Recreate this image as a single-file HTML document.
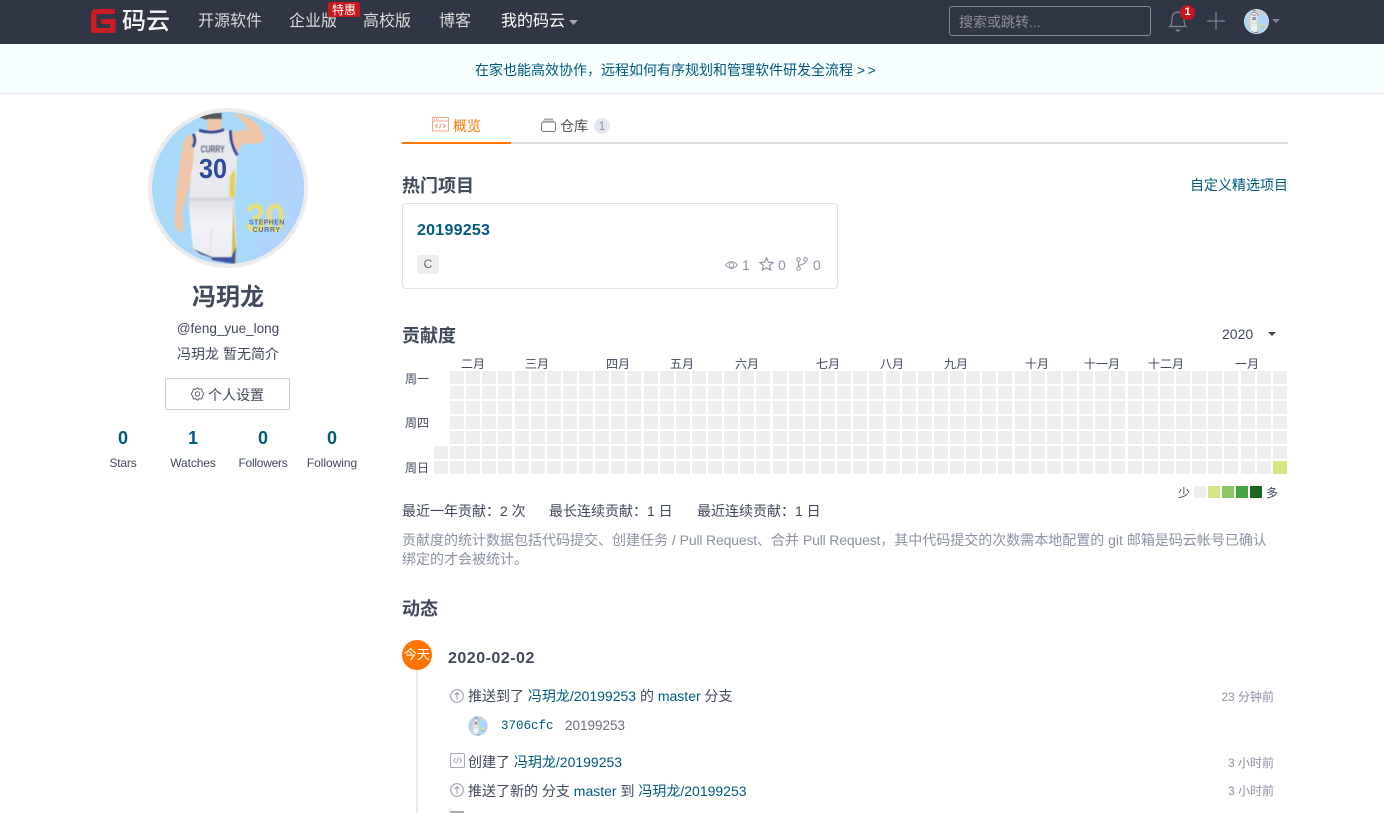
<!DOCTYPE html>
<html lang="zh"><head><meta charset="utf-8"><title>冯玥龙 - 码云</title>
<style>
html,body{margin:0;padding:0;background:#fff;width:1384px;height:813px;overflow:hidden}
body{font-family:"Liberation Sans","Noto Sans CJK SC",sans-serif;font-size:14px;color:#40485b;position:relative}
.t{position:absolute;white-space:nowrap;line-height:20px;height:20px}
.c{text-align:center;transform:translateX(-50%)}
.r{transform:translateX(-100%)}
.b{position:absolute}
a,.l{color:#005980;text-decoration:none}
.h{font-size:18px;font-weight:700;color:#40485b}
.n{font-size:16px;color:#d9dadd}
.m{font-size:12px;color:#40485b}
.g{color:#8c92a4}
.pr{letter-spacing:-.17px}
svg{position:absolute;overflow:visible}
</style></head><body>
<svg width="0" height="0" style="position:absolute">
<defs>
<clipPath id="cp"><circle cx="384" cy="263" r="228"/></clipPath>
<filter id="soft" x="-5%" y="-5%" width="110%" height="110%"><feGaussianBlur stdDeviation="1.600"/></filter>
<linearGradient id="sh" x1="0" y1="0" x2="0" y2="1"><stop offset="0" stop-color="#e2e3e8"/><stop offset=".35" stop-color="#f2f3f6"/><stop offset="1" stop-color="#e9eaef"/></linearGradient>
<symbol id="av" viewBox="144 23 480 480">
<circle cx="384" cy="263" r="240" fill="#ececec"/>
<g clip-path="url(#cp)">
<rect x="144" y="23" width="480" height="480" fill="#a9d9f9"/>
<path d="M510 23H624V503H470V405H510Z" fill="#b0d3fb"/>
<g filter="url(#soft)">
<path d="M298 38H365V62Q330 64 300 52Z" fill="#56565c"/>
<path d="M322 56H364V94H322Z" fill="#eec5a6"/>
<path d="M398 38Q440 42 470 70Q495 100 492 120Q470 135 430 130Q415 140 412 165L392 100Q425 84 445 88Q430 60 398 38Z" fill="#eec5a6"/>
<path d="M280 102Q248 105 246 150L232 240Q225 320 224 370Q232 395 246 398Q254 370 245 340L270 250L288 150Z" fill="#eec5a6"/>
<path d="M279 100L298 90H372L391 90L412 165L405 296H268L272 230Q288 150 279 100Z" fill="#e8e9ee"/>
<path d="M280 100Q290 125 278 140M391 90Q392 135 412 165M297 90Q335 102 372 88" fill="none" stroke="#2f4a9c" stroke-width="9"/>
<path d="M390 225L405 205L405 292L388 290Z" fill="#e3d257"/>
<path d="M268 292L405 290V302L268 302Z" fill="#d5d6dc"/>
<path d="M266 302L404 302L410 490L335 482L330 472L300 465L280 450L272 380Z" fill="url(#sh)"/>
<path d="M335 385L330 470" stroke="#d9dae0" stroke-width="3" fill="none"/>
<path d="M400 305L410 490L394 485Z" fill="#d5bd50"/>
<path d="M278 445L300 462L332 472L336 480L405 491L408 440L394 470L336 470L290 450Z" fill="#3d56a3"/>
</g>
<text x="338" y="157" font-size="29" font-weight="700" text-anchor="middle" fill="#566178" textLength="72" lengthAdjust="spacingAndGlyphs" font-family="Liberation Sans" filter="url(#soft)">CURRY</text>
<text x="339" y="233" font-size="84" font-weight="700" text-anchor="middle" fill="#2f4a9c" textLength="84" lengthAdjust="spacingAndGlyphs" font-family="Liberation Sans">30</text>
<text x="496" y="393" font-size="120" font-weight="700" text-anchor="middle" fill="#e5de7d" textLength="118" lengthAdjust="spacingAndGlyphs" font-family="Liberation Sans" filter="url(#soft)">30</text>
<text x="500" y="372" font-size="21" font-weight="700" text-anchor="middle" fill="#5b7096" textLength="106" font-family="Liberation Sans">STEPHEN</text>
<text x="499" y="395" font-size="21" font-weight="700" text-anchor="middle" fill="#5b7096" textLength="82" font-family="Liberation Sans">CURRY</text>
</g>
</symbol>
<g id="col"><rect y="371" width="14" height="13"/><rect y="386" width="14" height="13"/><rect y="401" width="14" height="13"/><rect y="416" width="14" height="13"/><rect y="431" width="14" height="13"/><rect y="446" width="14" height="13"/><rect y="461" width="14" height="13"/></g>
<symbol id="up" viewBox="0 0 14 14"><circle cx="7" cy="7" r="6.3" fill="none" stroke="#9aa0ae" stroke-width="1.1"/><path d="M7 10.8V3.6M4.6 6L7 3.6L9.4 6" fill="none" stroke="#9aa0ae" stroke-width="1.1"/></symbol>
</defs>
</svg>

<!-- nav -->
<div class="b" style="left:0;top:0;width:1384px;height:44px;background:#303643"></div>
<svg style="left:91px;top:9px" width="25" height="24" viewBox="0 0 25 24"><path d="M3 0H24V5H7Q5.500 5 5.500 6.500V17.500Q5.500 19 7 19H19V15H10V10H24.500V24H2Q0 24 0 22V3Z" fill="#c71d23"/></svg>
<div class="t" style="left:122px;top:12px;font-size:24px;line-height:20px;color:#f5f5f5;font-weight:500">码云</div>
<div class="t n" style="left:198px;top:12px">开源软件</div>
<div class="t n" style="left:289px;top:12px">企业版</div>
<div class="t n" style="left:363px;top:12px">高校版</div>
<div class="t n" style="left:439px;top:12px">博客</div>
<div class="t n" style="left:501px;top:12px;color:#fff">我的码云</div>
<svg style="left:569px;top:20px" width="9" height="5"><path d="M0 0H9L4.500 5Z" fill="#a3a7af"/></svg>
<div class="b" style="left:328px;top:2px;width:32px;height:15px;background:#c7161f;border-radius:2px;color:#fff;font-size:12px;line-height:17px;text-align:center">特惠</div>
<div class="b" style="left:949px;top:6px;width:200px;height:28px;border:1px solid #878c96;border-radius:3px"></div>
<div class="t" style="left:959px;top:12px;color:#8a8e98">搜索或跳转...</div>
<svg style="left:1169px;top:9px" width="18" height="24" viewBox="0 0 18 24"><path d="M1 17.500Q3 16 3 9Q3.500 3.500 9 3Q14.500 3.500 15 9Q15 16 17 17.500Z" fill="none" stroke="#80858f" stroke-width="1.2"/><path d="M6 20.500H12L9 23Z" fill="#80858f"/></svg>
<div class="b" style="left:1180px;top:5px;width:15px;height:15px;border-radius:50%;background:#c7161f;color:#fff;font-size:11px;font-weight:700;line-height:15px;text-align:center">1</div>
<svg style="left:1207px;top:12px" width="18" height="18"><path d="M0 9H18M9 0V18" stroke="#7d828c" stroke-width="1.300"/></svg>
<svg style="left:1244px;top:9px" width="25" height="25"><use href="#av" width="25" height="25"/></svg>
<svg style="left:1272px;top:19px" width="8" height="4"><path d="M0 0H8L4 4Z" fill="#80858f"/></svg>

<!-- banner -->
<div class="b" style="left:0;top:44px;width:1384px;height:49px;background:#f7feff;border-bottom:1px solid #e6e8eb"></div>
<div class="t l" style="left:475px;top:60px">在家也能高效协作，远程如何有序规划和管理软件研发全流程 <span style="word-spacing:-1.500px">&gt; &gt;</span></div>

<!-- left -->
<svg style="left:148px;top:108px" width="160" height="160"><use href="#av" width="160" height="160"/></svg>
<div class="t c" style="left:228px;top:288px;font-size:24px;font-weight:700">冯玥龙</div>
<div class="t c" style="left:228px;top:319px;font-size:13.500px">@feng_yue_long</div>
<div class="t c" style="left:228px;top:344px">冯玥龙 暂无简介</div>
<div class="b" style="left:165px;top:378px;width:123px;height:30px;border:1px solid #ccc;border-radius:2px"></div>
<svg style="left:191px;top:387px" width="13" height="14" viewBox="0 0 13 14"><path d="M6.500.7L8 2.300L10.500 2L11.300 4.300L12.700 7L11.300 9.700L10.500 12L8 11.700L6.500 13.300L5 11.700L2.500 12L1.700 9.700L.3 7L1.700 4.300L2.500 2L5 2.300Z" fill="none" stroke="#5c6370"/><circle cx="6.500" cy="7" r="2.200" fill="none" stroke="#5c6370"/></svg>
<div class="t" style="left:208px;top:385px">个人设置</div>
<div class="t c l" style="left:123px;top:428px;font-size:18px;font-weight:700">0</div>
<div class="t c l" style="left:193px;top:428px;font-size:18px;font-weight:700">1</div>
<div class="t c l" style="left:263px;top:428px;font-size:18px;font-weight:700">0</div>
<div class="t c l" style="left:332px;top:428px;font-size:18px;font-weight:700">0</div>
<div class="t c m" style="left:123px;top:453px;letter-spacing:-.2px">Stars</div>
<div class="t c m" style="left:193px;top:453px;letter-spacing:-.1px">Watches</div>
<div class="t c m" style="left:263px;top:453px;letter-spacing:-.25px">Followers</div>
<div class="t c m" style="left:332px;top:453px;letter-spacing:-.05px">Following</div>

<!-- tabs -->
<div class="b" style="left:402px;top:142px;width:886px;height:2px;background:#ddd"></div>
<div class="b" style="left:402px;top:142px;width:109px;height:2px;background:#ff7500"></div>
<svg style="left:432px;top:117px" width="17" height="15" viewBox="0 0 17 15"><rect x=".5" y=".5" width="16" height="13.500" fill="none" stroke="#f9a58c"/><path d="M.5 4H16.500" stroke="#f9a58c"/><path d="M2 2.200H3M4 2.200H5M6 2.200H7" stroke="#f9a58c"/><path d="M5.500 7L3.500 9L5.500 11M11.500 7L13.500 9L11.500 11M9.500 6.500L7.500 11.500" fill="none" stroke="#f08a60" stroke-width=".9"/></svg>
<div class="t" style="left:453px;top:116px;color:#ff7500">概览</div>
<svg style="left:541px;top:118px" width="15" height="14" viewBox="0 0 15 14"><path d="M3 .5H12V2H3Z" fill="#aaa"/><path d="M2 2.500H13V4H2Z" fill="#bbb"/><rect x=".5" y="4" width="14" height="9.500" rx="2" fill="none" stroke="#777"/></svg>
<div class="t" style="left:560px;top:116px;font-size:14px;color:#555">仓库</div>
<div class="b" style="left:594px;top:118px;width:16px;height:16px;border-radius:50%;background:#e5e7ef;color:#8c92a4;font-size:12px;line-height:16px;text-align:center">1</div>

<!-- hot -->
<div class="t h" style="left:402px;top:176px">热门项目</div>
<div class="t l" style="left:1288px;top:175px;transform:translateX(-100%)">自定义精选项目</div>
<div class="b" style="left:402px;top:203px;width:434px;height:84px;border:1px solid #dce3e8;border-radius:4px"></div>
<div class="t l" style="left:417px;top:222px;font-size:16px;font-weight:700;letter-spacing:.25px;line-height:18px">20199253</div>
<div class="b" style="left:417px;top:255px;width:22px;height:19px;background:#eee;border-radius:3px;color:#666;font-size:12px;line-height:19px;text-align:center">C</div>
<svg style="left:725px;top:260px" width="13" height="10" viewBox="0 0 13 10"><path d="M.5 5Q6.500-2 12.500 5Q6.500 12 .5 5Z" fill="none" stroke="#989eac"/><circle cx="6.500" cy="5" r="2.300" fill="none" stroke="#989eac"/></svg>
<div class="t g" style="left:742px;top:255px">1</div>
<svg style="left:759px;top:257px" width="15" height="14" viewBox="0 0 15 14"><path d="M7.500 1L9.400 5.100L14 5.600L10.600 8.600L11.600 13L7.500 10.700L3.400 13L4.400 8.600L1 5.600L5.600 5.100Z" fill="none" stroke="#8c92a4" stroke-width="1.200"/></svg>
<div class="t g" style="left:778px;top:255px">0</div>
<svg style="left:796px;top:257px" width="12" height="14" viewBox="0 0 12 14"><circle cx="2.500" cy="2.500" r="1.800" fill="none" stroke="#8c92a4"/><circle cx="2.500" cy="11.500" r="1.800" fill="none" stroke="#8c92a4"/><circle cx="9.500" cy="2.500" r="1.800" fill="none" stroke="#8c92a4"/><path d="M2.500 4.500V9.500M9.500 4.500Q9.500 7 2.500 8.500" fill="none" stroke="#8c92a4"/></svg>
<div class="t g" style="left:813px;top:255px">0</div>

<!-- contrib -->
<div class="t h" style="left:402px;top:326px">贡献度</div>
<div class="t" style="left:1222px;top:324px">2020</div>
<svg style="left:1268px;top:332px" width="8" height="4"><path d="M0 0H8L4 4Z" fill="#40485b"/></svg>
<div class="t m" style="left:461px;top:354px">二月</div>
<div class="t m" style="left:525px;top:354px">三月</div>
<div class="t m" style="left:606px;top:354px">四月</div>
<div class="t m" style="left:670px;top:354px">五月</div>
<div class="t m" style="left:735px;top:354px">六月</div>
<div class="t m" style="left:816px;top:354px">七月</div>
<div class="t m" style="left:880px;top:354px">八月</div>
<div class="t m" style="left:944px;top:354px">九月</div>
<div class="t m" style="left:1025px;top:354px">十月</div>
<div class="t m" style="left:1084px;top:354px">十一月</div>
<div class="t m" style="left:1148px;top:354px">十二月</div>
<div class="t m" style="left:1235px;top:354px">一月</div>
<div class="t m" style="left:405px;top:369px">周一</div>
<div class="t m" style="left:405px;top:413px">周四</div>
<div class="t m" style="left:405px;top:458px">周日</div>
<svg style="left:0;top:0" width="1384" height="813" fill="#eeeeee" shape-rendering="crispEdges">
<rect x="434" y="446" width="14" height="13"/><rect x="434" y="461" width="14" height="13"/>
<use href="#col" x="450"/><use href="#col" x="466"/><use href="#col" x="482"/><use href="#col" x="498"/><use href="#col" x="515"/><use href="#col" x="531"/><use href="#col" x="547"/><use href="#col" x="563"/><use href="#col" x="579"/><use href="#col" x="595"/><use href="#col" x="611"/><use href="#col" x="627"/><use href="#col" x="644"/><use href="#col" x="660"/><use href="#col" x="676"/><use href="#col" x="692"/><use href="#col" x="708"/><use href="#col" x="724"/><use href="#col" x="740"/><use href="#col" x="756"/><use href="#col" x="773"/><use href="#col" x="789"/><use href="#col" x="805"/><use href="#col" x="821"/><use href="#col" x="837"/><use href="#col" x="853"/><use href="#col" x="869"/><use href="#col" x="886"/><use href="#col" x="902"/><use href="#col" x="918"/><use href="#col" x="934"/><use href="#col" x="950"/><use href="#col" x="966"/><use href="#col" x="982"/><use href="#col" x="998"/><use href="#col" x="1015"/><use href="#col" x="1031"/><use href="#col" x="1047"/><use href="#col" x="1063"/><use href="#col" x="1079"/><use href="#col" x="1095"/><use href="#col" x="1111"/><use href="#col" x="1128"/><use href="#col" x="1144"/><use href="#col" x="1160"/><use href="#col" x="1176"/><use href="#col" x="1192"/><use href="#col" x="1208"/><use href="#col" x="1224"/><use href="#col" x="1241"/><use href="#col" x="1257"/><use href="#col" x="1273"/>
<rect x="1273" y="461" width="14" height="13" fill="#d6e685"/>
<rect x="1194" y="486" width="12" height="12" fill="#eee"/><rect x="1208" y="486" width="12" height="12" fill="#d6e685"/><rect x="1222" y="486" width="12" height="12" fill="#8cc665"/><rect x="1236" y="486" width="12" height="12" fill="#44a340"/><rect x="1250" y="486" width="12" height="12" fill="#1e6823"/>
</svg>
<div class="t m" style="left:1178px;top:483px">少</div>
<div class="t m" style="left:1266px;top:483px">多</div>
<div class="t" style="left:402px;top:501px">最近一年贡献：2 次</div>
<div class="t" style="left:549px;top:501px">最长连续贡献：1 日</div>
<div class="t" style="left:697px;top:501px">最近连续贡献：1 日</div>
<div class="t g" style="left:402px;top:530px">贡献度的统计数据包括代码提交、创建任务 / <span class="pr">Pull Request</span>、合并 <span class="pr">Pull Request</span>，其中代码提交的次数需本地配置的 git 邮箱是码云帐号已确认</div>
<div class="t g" style="left:402px;top:549px">绑定的才会被统计。</div>

<!-- activity -->
<div class="t h" style="left:402px;top:599px">动态</div>
<div class="b" style="left:416px;top:670px;width:2px;height:143px;background:#e6e9ee"></div>
<div class="b" style="left:402px;top:640px;width:30px;height:30px;border-radius:50%;background:#ff7500;color:#fff;font-size:13px;line-height:30px;text-align:center">今天</div>
<div class="t" style="left:448px;top:649px;font-size:16px;font-weight:700;letter-spacing:.5px;line-height:19px">2020-02-02</div>
<svg style="left:450px;top:689px" width="14" height="14"><use href="#up" width="14" height="14"/></svg>
<div class="t" style="left:468px;top:686px">推送到了 <span class="l">冯玥龙/20199253</span> 的 <span class="l">master</span> 分支</div>
<div class="t g" style="left:1274px;top:687px;font-size:12px;transform:translateX(-100%)">23 分钟前</div>
<svg style="left:468px;top:716px" width="20" height="20"><use href="#av" width="20" height="20"/></svg>
<div class="t l" style="left:501px;top:716px;font-family:'Liberation Mono',monospace;font-size:12.500px">3706cfc</div>
<div class="t" style="left:565px;top:716px;font-size:13.500px;color:#6a6f7c">20199253</div>
<svg style="left:450px;top:753px" width="15" height="15" viewBox="0 0 15 15"><rect x=".5" y=".5" width="14" height="14" rx="1" fill="none" stroke="#a5aab5"/><path d="M5.500 5L3.500 7.500L5.500 10M9.500 5L11.500 7.500L9.500 10M8.300 4.500L6.700 10.500" fill="none" stroke="#9aa0ae" stroke-width=".9"/></svg>
<div class="t" style="left:468px;top:752px">创建了 <span class="l">冯玥龙/20199253</span></div>
<div class="t g" style="left:1274px;top:753px;font-size:12px;transform:translateX(-100%)">3 小时前</div>
<svg style="left:450px;top:783px" width="14" height="14"><use href="#up" width="14" height="14"/></svg>
<div class="t" style="left:468px;top:781px">推送了新的 分支 <span class="l">master</span> 到 <span class="l">冯玥龙/20199253</span></div>
<div class="t g" style="left:1274px;top:781px;font-size:12px;transform:translateX(-100%)">3 小时前</div>
<div class="b" style="left:450px;top:811px;width:14px;height:2px;background:#a5aab5"></div>
</body></html>
